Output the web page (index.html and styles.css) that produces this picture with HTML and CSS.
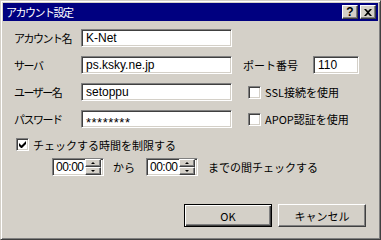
FILE: index.html
```html
<!DOCTYPE html>
<html>

<head>
  <meta charset="utf-8">
  <meta name="viewport" content="width=device-width,initial-scale=1">
  <link rel="stylesheet" href="styles.css">
</head>

<body>
  <div class="window">
    <div class="titlebar">
      <span class="title">アカウント設定</span>
      <div class="tbtns">
        <span class="tbtn help">?</span>
        <span class="tbtn close">
          <svg width="8" height="7" viewBox="0 0 8 7"><path d="M0 0h2l2 2 2-2h2L5 3.5 8 7H6L4 5 2 7H0l3-3.5z" fill="#000"/></svg>
        </span>
      </div>
    </div>

    <div class="content">
      <div class="row">
        <span class="lbl">アカウント名</span>
        <div class="edit wide">K-Net</div>
      </div>
      <div class="row">
        <span class="lbl">サーバ</span>
        <div class="edit wide">ps.ksky.ne.jp</div>
        <span class="port-lbl">ポート番号</span>
        <div class="edit port">110</div>
      </div>
      <div class="row">
        <span class="lbl">ユーザー名</span>
        <div class="edit wide">setoppu</div>
        <span class="check"><span class="box"></span>SSL接続を使用</span>
      </div>
      <div class="row">
        <span class="lbl">パスワード</span>
        <div class="edit wide pass">********</div>
        <span class="check"><span class="box"></span>APOP認証を使用</span>
      </div>

      <div class="limit">
        <span class="box">
          <svg width="7" height="7" viewBox="0 0 7 7"><path d="M0 2v3l2 2h1l4-4V0L2.5 4.5z" fill="#000"/></svg>
        </span>
        チェックする時間を制限する
      </div>

      <div class="spinrow">
        <div class="edit spin">
          <span class="val">00:00</span>
          <span class="arrows">
            <span class="arr up"></span>
            <span class="arr down"></span>
          </span>
        </div>
        <span class="from">から</span>
        <div class="edit spin">
          <span class="val">00:00</span>
          <span class="arrows">
            <span class="arr up"></span>
            <span class="arr down"></span>
          </span>
        </div>
        <span class="until">までの間チェックする</span>
      </div>

      <div class="buttons">
        <span class="btn default"><span>OK</span></span>
        <span class="btn"><span>キャンセル</span></span>
      </div>
    </div>
  </div>
</body>

</html>
```

FILE: styles.css
```css
/* Window frame */

body {
  margin: 0;
  font-family: "Liberation Sans", "Noto Sans CJK JP", sans-serif;
  font-size: 11px;
  color: #000;
}

.window {
  width: 381px;
  height: 240px;
  box-sizing: border-box;
  background-color: #d4d0c8;
  border: 1px solid;
  border-color: #d4d0c8 #404040 #404040 #d4d0c8;
  box-shadow: inset 1px 1px #fff, inset -1px -1px #808080;
  padding: 2px;
}

/* Title bar */

.titlebar {
  height: 18px;
  background-color: #000080;
  display: flex;
  align-items: center;
  justify-content: space-between;
  padding: 0 2px 0 2px;
}

.title {
  color: #fff;
  font-family: "Noto Sans CJK JP", sans-serif;
  font-size: 11px;
  letter-spacing: -1.5px;
  padding-left: 1px;
}

.tbtns {
  display: flex;
  gap: 2px;
}

.tbtn {
  width: 16px;
  height: 14px;
  box-sizing: border-box;
  background-color: #d4d0c8;
  border: 1px solid;
  border-color: #fff #404040 #404040 #fff;
  box-shadow: inset -1px -1px #808080;
  display: flex;
  align-items: center;
  justify-content: center;
  font-weight: bold;
  font-size: 12px;
  line-height: 1;
}

/* Dialog contents */

.content {
  padding: 8px 0 0 11px;
}

.row {
  display: flex;
  align-items: center;
  height: 18px;
  margin-bottom: 9px;
}

.lbl {
  width: 67px;
  font-family: "Noto Sans CJK JP", sans-serif;
  letter-spacing: -1.5px;
}

.edit {
  height: 18px;
  box-sizing: border-box;
  background-color: #fff;
  border: 1px solid;
  border-color: #808080 #fff #fff #808080;
  box-shadow: inset 1px 1px #404040, inset -1px -1px #d4d0c8;
  padding: 0 3px 0 4px;
  display: flex;
  align-items: center;
  font-size: 12px;
}

.wide {
  width: 151px;
}

.pass {
  font-size: 13px;
  letter-spacing: 0.5px;
  align-items: flex-start;
  padding-top: 4px;
}

.port-lbl {
  width: 70px;
  margin-left: 11px;
  font-family: "Noto Sans CJK JP", sans-serif;
}

.port {
  width: 46px;
}

.check {
  margin-left: 16px;
  display: flex;
  align-items: center;
  font-family: "Noto Sans CJK JP", sans-serif;
}

.box {
  width: 13px;
  height: 13px;
  box-sizing: border-box;
  background-color: #fff;
  border: 1px solid;
  border-color: #808080 #fff #fff #808080;
  box-shadow: inset 1px 1px #404040, inset -1px -1px #d4d0c8;
  margin-right: 4px;
  display: flex;
  align-items: center;
  justify-content: center;
}

.limit {
  display: flex;
  align-items: center;
  margin: 10px 0 0 2px;
  height: 13px;
  font-family: "Noto Sans CJK JP", sans-serif;
}

/* Time range */

.spinrow {
  display: flex;
  align-items: center;
  margin: 7px 0 0 38px;
  height: 18px;
}

.spin {
  width: 52px;
  padding: 0 2px 0 3px;
  justify-content: space-between;
}

.spin .val {
  font-size: 12px;
  letter-spacing: -0.5px;
}

.arrows {
  display: flex;
  flex-direction: column;
  width: 16px;
  height: 16px;
}

.arr {
  flex: 1;
  background-color: #d4d0c8;
  border: 1px solid;
  border-color: #fff #404040 #404040 #fff;
  box-shadow: inset -1px -1px #808080;
  display: flex;
  align-items: center;
  justify-content: center;
}

.arr::after {
  content: "";
  border-left: 2px solid transparent;
  border-right: 2px solid transparent;
}

.arr.up::after {
  border-bottom: 2px solid #000;
}

.arr.down::after {
  border-top: 2px solid #000;
}

.from {
  margin: 0 11px 0 9px;
  font-family: "Noto Sans CJK JP", sans-serif;
}

.until {
  margin-left: 10px;
  font-family: "Noto Sans CJK JP", sans-serif;
}

/* Buttons */

.buttons {
  display: flex;
  justify-content: flex-end;
  gap: 6px;
  margin: 28px 12px 0 0;
}

.btn {
  width: 88px;
  height: 23px;
  box-sizing: border-box;
  background-color: #d4d0c8;
  border: 1px solid;
  border-color: #fff #404040 #404040 #fff;
  box-shadow: inset -1px -1px #808080;
  display: flex;
  align-items: center;
  justify-content: center;
  font-family: "Noto Sans CJK JP", sans-serif;
}

.btn.default {
  border: 1px solid #000;
  box-shadow: inset 1px 1px #fff, inset -1px -1px #404040, inset -2px -2px #808080;
}
```
